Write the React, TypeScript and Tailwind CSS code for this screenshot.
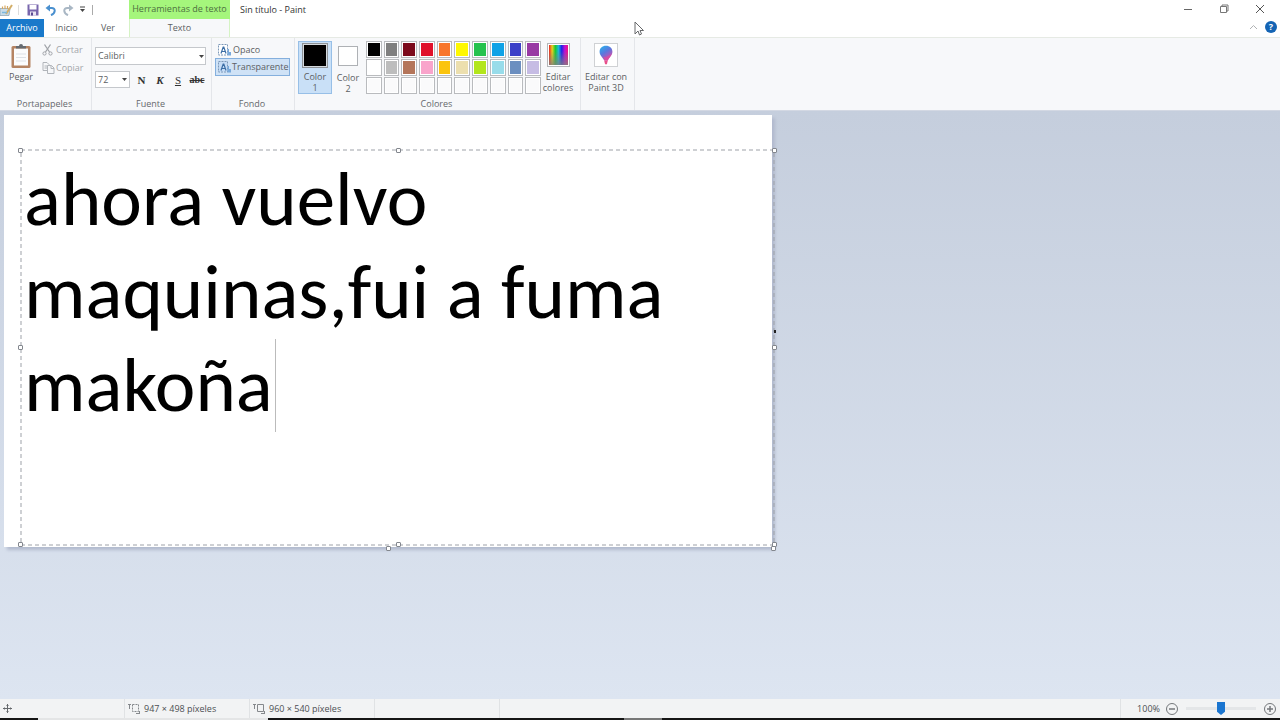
import type { ReactNode } from "react";

const palette = [
  "#000000", "#7f7f7f", "#7c0a1c", "#e0102a", "#f8762c", "#fff800", "#25c24e", "#10a2e6", "#3b40c8", "#983aa4",
  "#ffffff", "#bdbdbd", "#b4755a", "#f9a4cb", "#fbc40e", "#ecdfae", "#b2e61d", "#98dcea", "#6c8fc0", "#c6bce4",
];

const emptySlots = Array.from({ length: 10 }, (_, i) => i);

function Group({ label, className, children }: { label: string; className: string; children: ReactNode }) {
  return (
    <section aria-label={label || undefined} className={`flex flex-col border-r border-[#e4e6ea] ${className}`}>
      <div className="flex h-[59px] items-start">{children}</div>
      <div className="pr-[2px] text-center text-[9px] leading-[13px] text-[#66686c]">{label}</div>
    </section>
  );
}

function AppIcon() {
  return (
    <svg width="14" height="14" viewBox="0 0 14 14" fill="none">
      <path d="M0 5.500h10l-1 7H0z" fill="#c9dbe8" stroke="#91a8b8" strokeWidth=".8" />
      <path d="M2.500 6V3.500M5 6V2.500M7.500 6V3" stroke="#d7a760" strokeWidth="1.200" />
      <path d="M6 11 12 2" stroke="#d3ae68" strokeWidth="2" />
      <path d="M2 9.500h5" stroke="#7cb8dd" strokeWidth="1.500" />
    </svg>
  );
}

function SaveIcon() {
  return (
    <svg width="12" height="12" viewBox="0 0 12 12">
      <path d="M.5.5h11v11H.5z" fill="#7866ad" />
      <path d="M2.500 1h7v4.500h-7z" fill="#fff" />
      <path d="M3 7.500h6v4H3z" fill="#e9e4f3" />
      <path d="M4 8.500h2v3H4z" fill="#5b4a92" />
    </svg>
  );
}

function TurnIcon({ color, flip }: { color: string; flip?: boolean }) {
  return (
    <svg width="12" height="12" viewBox="0 0 12 12" fill="none">
      <g transform={flip ? "translate(12 0) scale(-1 1)" : undefined}>
        <path d="M2.500 4h4.200c4 0 4.300 5-.7 7.200" stroke={color} strokeWidth="2" />
        <path d="M.5 4 5 .5v7z" fill={color} />
      </g>
    </svg>
  );
}

function ClipboardIcon() {
  return (
    <svg width="22" height="26" viewBox="0 0 22 26">
      <rect x="1.500" y="3" width="19" height="22" rx="1.500" fill="#b58463" />
      <path d="M4 5.500h14v17H4z" fill="#fbfcfd" />
      <path d="M6 11h10M6 14.500h10M6 18h10" stroke="#dde1e6" />
      <path d="M6 5.500V3h3a2 2 0 0 1 4 0h3v2.500z" fill="#666b71" />
    </svg>
  );
}

function CutIcon() {
  return (
    <svg width="11" height="12" viewBox="0 0 11 12" fill="none" stroke="#a1a4a9">
      <path d="M2.500.5 7.500 8M8.500.5 3.500 8" strokeWidth="1.300" />
      <circle cx="2.500" cy="9.500" r="1.600" />
      <circle cx="8.500" cy="9.500" r="1.600" />
    </svg>
  );
}

function CopyIcon() {
  return (
    <svg width="13" height="12" viewBox="0 0 13 12" fill="#f6f7f9" stroke="#b1b5ba">
      <path d="M1 .5h4l2 2v6H1zM2.500 4h3M2.500 6h3" />
      <path d="M5.500 3.500h4l2.500 2.500v5.500H5.500zM9 3.500V6.500h3" />
    </svg>
  );
}

function BackgroundIcon({ filled }: { filled?: boolean }) {
  return (
    <svg width="14" height="12" viewBox="0 0 14 12" fill="none" className="shrink-0">
      <path d="M.5.5h9v10.500h-9z" fill={filled ? "#c6dcf5" : "#fff"} stroke="#7d98b8" strokeDasharray="2 1" />
      <path d="m3 9.500 2.200-6.500h.6L8 9.500M3.800 7.500h3.400" stroke="#3c6ea5" strokeWidth="1.200" />
      <path d="M9.500 5v6.500H13V8H11V5z" fill="#78a9db" />
    </svg>
  );
}

function BalloonIcon() {
  return (
    <svg width="22" height="22" viewBox="0 0 24 24">
      <defs>
        <linearGradient id="balloon" x1="0" y1="0" x2=".6" y2="1">
          <stop offset="0" stopColor="#22b9ee" />
          <stop offset=".5" stopColor="#5978de" />
          <stop offset="1" stopColor="#d94aaa" />
        </linearGradient>
      </defs>
      <path d="M12 2c4.200 0 7 2.800 7 6.500 0 3.900-3.300 6.200-5 9.500h-4C8.300 14.700 5 12.400 5 8.500 5 4.800 7.800 2 12 2z" fill="url(#balloon)" />
      <path d="M10 18h4l-1 4h-2z" fill="#e8508b" />
      <path d="M9 14c3 1 6-1 9-3-1 3-3 4.500-4 7h-3z" fill="#df4b9c" opacity=".75" />
    </svg>
  );
}

function SizeIcon({ solid }: { solid?: boolean }) {
  return (
    <svg width="12" height="12" viewBox="0 0 12 12" fill="none" stroke="#85888c">
      <path d="M1.500 1v5M0 1.500h3" />
      <path d="M4.500 1.500h6v7h-6z" strokeDasharray={solid ? undefined : "2 1"} />
      <path d="M8 10.500h3.500M11.500 8v3" />
    </svg>
  );
}

function Swatch({ color }: { color?: string }) {
  return (
    <button
      type="button"
      aria-label={color ? `Color ${color}` : "Color personalizado"}
      className="border border-[#b9bbbe] bg-white p-px"
    >
      <span className="block h-full w-full" style={{ backgroundColor: color ?? "#fafafb" }} />
    </button>
  );
}

function Handle({ className }: { className: string }) {
  return <span className={`absolute h-[5px] w-[5px] rounded-[1px] border border-[#83878e] bg-white ${className}`} />;
}

function TitleBar() {
  return (
    <header className="flex h-[38px] border-b border-[#e6eae4] bg-white">
      <div className="flex w-[129px] flex-col">
        <div className="flex h-[19px] items-center">
          <AppIcon />
          <span className="ml-1 h-[10px] w-px bg-[#ddd]" />
          <button type="button" aria-label="Guardar" className="ml-2"><SaveIcon /></button>
          <button type="button" aria-label="Deshacer" className="ml-[6px]"><TurnIcon color="#4a90cf" /></button>
          <button type="button" aria-label="Rehacer" className="ml-[5px]"><TurnIcon color="#a9b7c4" flip /></button>
          <button type="button" aria-label="Personalizar barra" className="ml-[5px]">
            <svg width="7" height="7" viewBox="0 0 7 7"><path d="M1 1h5" stroke="#444" /><path d="M1 3h5L3.500 6z" fill="#444" /></svg>
          </button>
          <span className="ml-[6px] h-[10px] w-px bg-[#aaa]" />
        </div>
        <nav className="flex h-[18px] text-[9px] leading-[18px] text-[#5c5f63]">
          <button type="button" className="w-[44px] bg-[#1979ca] text-white">Archivo</button>
          <button type="button" className="w-[45px]">Inicio</button>
          <button type="button" className="w-[38px]">Ver</button>
        </nav>
      </div>
      <div className="flex w-[101px] flex-col text-center text-[9px]">
        <div className="h-[19px] whitespace-nowrap bg-[#a5f67c] leading-[17px] text-[#4c7040]">Herramientas de texto</div>
        <button type="button" className="h-[19px] border-x border-[#d5f3c4] bg-[#f7f8fa] leading-[18px] text-[#5c5f63]">Texto</button>
      </div>
      <h1 className="ml-[10px] text-[9px] leading-[19px] text-[#333]">Sin título - Paint</h1>
      <div className="ml-auto flex flex-col">
        <div className="flex h-[18px] items-center gap-[26px] pr-[15px]">
          <button type="button" aria-label="Minimizar"><svg width="10" height="10"><path d="M1 5.500h8" stroke="#666" /></svg></button>
          <button type="button" aria-label="Restaurar">
            <svg width="10" height="10" fill="none" stroke="#777"><path d="M1.500 2.500h6v6h-6zM3 2.500V1h6v6H7.500" /></svg>
          </button>
          <button type="button" aria-label="Cerrar"><svg width="10" height="10"><path d="m1 1 8 8M9 1 1 9" stroke="#555" /></svg></button>
        </div>
        <div className="flex h-[18px] items-center justify-end gap-[7px] pr-[3px]">
          <button type="button" aria-label="Contraer la cinta"><svg width="9" height="6" fill="none"><path d="m1 5 3.500-3.500L8 5" stroke="#b0b2b4" /></svg></button>
          <button type="button" aria-label="Ayuda" className="h-3 w-3 rounded-full bg-[#1464b4] text-[9px] font-bold leading-3 text-white">?</button>
        </div>
      </div>
    </header>
  );
}

function Ribbon() {
  return (
    <div className="flex h-[73px] border-b border-[#d3d8e3] bg-[#f7f8fa] text-[9px] leading-[10px] text-[#5c5f63]">
      <Group label="Portapapeles" className="w-[92px]">
        <button type="button" className="mt-[5px] flex w-[42px] flex-col items-center gap-[3px]">
          <ClipboardIcon />
          Pegar
        </button>
        <div className="mt-[3px] flex flex-col text-[#a3a6aa]">
          <button type="button" className="flex h-[18px] items-center gap-[2px]"><span className="w-[12px]"><CutIcon /></span>Cortar</button>
          <button type="button" className="flex h-[18px] items-center gap-[2px]"><span className="w-[12px]"><CopyIcon /></span>Copiar</button>
        </div>
      </Group>

      <Group label="Fuente" className="w-[120px]">
        <div className="flex flex-col gap-[6px] pl-[3px] pt-[9px]">
          <div className="relative">
            <select aria-label="Familia de fuente" className="h-[18px] w-[111px] appearance-none border border-[#c5c8cc] bg-white pl-[2px] leading-[16px]">
              <option>Calibri</option>
            </select>
            <svg className="pointer-events-none absolute right-[3px] top-[8px]" width="5" height="3"><path d="M0 0h5L2.500 3z" fill="#444" /></svg>
          </div>
          <div className="flex items-center">
            <div className="relative">
              <select aria-label="Tamaño de fuente" className="h-[17px] w-[35px] appearance-none border border-[#c5c8cc] bg-white pl-[2px] leading-[15px]">
                <option>72</option>
              </select>
              <svg className="pointer-events-none absolute right-[3px] top-[7px]" width="5" height="3"><path d="M0 0h5L2.500 3z" fill="#444" /></svg>
            </div>
            <div className="ml-[2px] flex font-['Liberation_Serif',serif] text-[11px] font-bold text-[#333]">
              <button type="button" aria-label="Negrita" className="w-[19px]">N</button>
              <button type="button" aria-label="Cursiva" className="w-[18px] italic">K</button>
              <button type="button" aria-label="Subrayado" className="w-[18px] font-normal underline">S</button>
              <button type="button" aria-label="Tachado" className="w-[20px] text-[10px] line-through">abc</button>
            </div>
          </div>
        </div>
      </Group>

      <Group label="Fondo" className="w-[83px]">
        <div className="flex flex-col pl-[3px] pt-[3px]">
          <button type="button" className="flex h-[17px] w-[75px] items-center gap-px pl-[3px]"><BackgroundIcon />Opaco</button>
          <button type="button" aria-pressed="true" className="flex h-[18px] w-[75px] items-center border border-[#84afdd] bg-[#cfe2f6] pl-[2px]"><BackgroundIcon filled />Transparente</button>
        </div>
      </Group>

      <Group label="Colores" className="w-[286px]">
        <button type="button" aria-pressed="true" className="ml-[3px] mt-[3px] flex h-[53px] w-[34px] flex-col items-center border border-[#97bfe7] bg-[#c9e0f7] pt-px leading-[11px]">
          <span className="mb-[3px] h-[26px] w-[26px] border border-[#8d9297] bg-black outline-1 -outline-offset-2 outline-[#d5dade]" />
          <span>Color</span>
          <span>1</span>
        </button>
        <button type="button" className="mt-[3px] flex h-[53px] w-[32px] flex-col items-center pt-[5px] leading-[11px]">
          <span className="mb-[6px] h-[20px] w-[20px] border border-[#aeb1b5] bg-white" />
          <span>Color</span>
          <span>2</span>
        </button>
        <div className="ml-[2px] mt-[3px] grid h-[53px] w-[175px] grid-cols-10 grid-rows-3 gap-x-[2px] gap-y-[1px]">
          {palette.map((color) => <Swatch key={color} color={color} />)}
          {emptySlots.map((slot) => <Swatch key={slot} />)}
        </div>
        <button type="button" className="mt-[5px] flex w-[34px] flex-col items-center gap-[4px] leading-[11px]">
          <span className="h-[24px] w-[23px] border border-[#b4b6b9] bg-white p-px">
            <span className="block h-full w-full bg-[linear-gradient(to_bottom,transparent_30%,#808080cc),linear-gradient(to_right,#e82020,#e8d020,#18c830,#18b8d8,#2020e8,#c010d0,#f01080)]" />
          </span>
          <span className="flex flex-col"><span>Editar</span><span>colores</span></span>
        </button>
      </Group>

      <Group label="" className="w-[54px]">
        <button type="button" className="mt-[5px] flex w-[50px] flex-col items-center gap-[4px] leading-[11px]">
          <span className="border border-[#cfd1d4] bg-white"><BalloonIcon /></span>
          <span className="flex flex-col whitespace-nowrap"><span>Editar con</span><span>Paint 3D</span></span>
        </button>
      </Group>
    </div>
  );
}

function Workspace() {
  return (
    <main className="flex-1 bg-gradient-to-b from-[#c5cedd] to-[#dde5f1] pl-1 pt-1">
      <div className="relative h-[432px] w-[768px] bg-white shadow-[3px_3px_3px_#b2bace]">
        <div className="absolute left-[16px] top-[34px] h-[397px] w-[755px]">
          <svg className="pointer-events-none absolute inset-0 h-full w-full overflow-visible" fill="none">
            <rect x="1" y="1" width="753" height="395" stroke="#9da1a8" strokeDasharray="4 3" />
          </svg>
          <textarea
            aria-label="Texto"
            spellCheck={false}
            defaultValue={"ahora vuelvo\nmaquinas,fui a fuma\nmakoña"}
            className="block h-full w-full resize-none overflow-hidden bg-transparent pl-[4px] pt-[4px] font-['Carlito','Lato',sans-serif] text-[77px] leading-[93px] text-black outline-none"
          />
          <span className="absolute left-[255px] top-[190px] h-[93px] w-px bg-[#bbb]" />
          <Handle className="-left-[2px] -top-[1px]" />
          <Handle className="left-[376px] -top-[1px]" />
          <Handle className="-right-[2px] -top-[1px]" />
          <Handle className="-left-[2px] top-[196px]" />
          <Handle className="-right-[2px] top-[196px]" />
          <Handle className="-left-[2px] -bottom-[1px]" />
          <Handle className="left-[376px] -bottom-[1px]" />
          <Handle className="-right-[2px] -bottom-[1px]" />
        </div>
        <Handle className="-bottom-[4px] left-[382px]" />
        <Handle className="-bottom-[4px] -right-[4px]" />
        <span className="absolute -right-[4px] top-[215px] h-[3px] w-[2px] bg-[#222]" />
      </div>
    </main>
  );
}

function StatusBar() {
  return (
    <footer className="bg-[#f2f3f4] text-[9px] text-[#4c4f53]">
      <div className="flex h-[19px] items-center">
        <div className="flex h-full w-[125px] items-center border-r border-[#e0e2e4] pl-[3px]">
          <svg width="9" height="9" stroke="#66696d"><path d="M4.500 0v9M0 4.500h9M3.500 1.500h2M3.500 7.500h2M1.500 3.500v2M7.500 3.500v2" /></svg>
        </div>
        <div className="flex h-full w-[125px] items-center gap-[4px] border-r border-[#e0e2e4] pl-[3px]"><SizeIcon />947 × 498 píxeles</div>
        <div className="flex h-full w-[125px] items-center gap-[4px] border-r border-[#e0e2e4] pl-[3px]"><SizeIcon solid />960 × 540 píxeles</div>
        <div className="h-full w-[125px] border-r border-[#e0e2e4]" />
        <div className="ml-auto flex h-full items-center border-l border-[#e0e2e4] pl-[16px] pr-[3px]">
          <label htmlFor="zoom" className="mr-[5px]">100%</label>
          <button type="button" aria-label="Alejar">
            <svg width="14" height="14" fill="none" stroke="#74777b"><circle cx="7" cy="7" r="5.500" /><path d="M4 7h6" strokeWidth="1.500" /></svg>
          </button>
          <input
            id="zoom"
            type="range"
            min="0"
            max="100"
            defaultValue="50"
            className="mx-[7px] h-[14px] w-[70px] appearance-none bg-transparent [&::-webkit-slider-runnable-track]:h-[3px] [&::-webkit-slider-runnable-track]:bg-[#e4e6e8] [&::-webkit-slider-thumb]:-mt-[5px] [&::-webkit-slider-thumb]:h-[13px] [&::-webkit-slider-thumb]:w-[8px] [&::-webkit-slider-thumb]:appearance-none [&::-webkit-slider-thumb]:bg-[#1a75d0] [&::-webkit-slider-thumb]:[clip-path:polygon(0_0,100%_0,100%_75%,50%_100%,0_75%)]"
          />
          <button type="button" aria-label="Acercar">
            <svg width="14" height="14" fill="none" stroke="#74777b"><circle cx="7" cy="7" r="5.500" /><path d="M4 7h6M7 4v6" strokeWidth="1.500" /></svg>
          </button>
        </div>
      </div>
      <div className="flex h-[2px]">
        <span className="w-[38px] bg-[#151515]" />
        <span className="w-[230px] bg-[#e4e5e6]" />
        <span className="flex-1 bg-[#151515]" />
        <span className="w-[38px] bg-[#777]" />
        <span className="w-[618px] bg-[#151515]" />
      </div>
    </footer>
  );
}

export default function App() {
  return (
    <div className="relative flex min-h-screen flex-col overflow-hidden bg-white font-['Open_Sans',sans-serif]">
      <TitleBar />
      <Ribbon />
      <Workspace />
      <StatusBar />
      <svg className="pointer-events-none absolute left-[634px] top-[21px]" width="11" height="16" fill="#fff" stroke="#66686a">
        <path d="M1 1v12l3-3 1.500 4 2-1L6 9.500h3.500z" />
      </svg>
    </div>
  );
}
